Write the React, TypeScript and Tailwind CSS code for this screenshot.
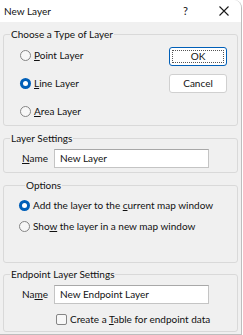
import React from 'react'

function Radio({ checked, children }: { checked?: boolean; children: React.ReactNode }) {
  return (
    <div className="flex items-center h-[20px] whitespace-nowrap">
      {checked ? (
        <span className="w-[11px] h-[11px] rounded-full bg-[#005fb8] flex items-center justify-center">
          <span className="w-[5px] h-[5px] rounded-full bg-white" />
        </span>
      ) : (
        <span className="w-[11px] h-[11px] rounded-full border border-[#858585] bg-[#f7f7f7]" />
      )}
      <span className="ml-[3px]">{children}</span>
    </div>
  )
}

function Group({ title, className, children }: { title: string; className?: string; children: React.ReactNode }) {
  return (
    <fieldset className={'border border-[#d9d9d9] rounded-[3px] ' + (className ?? '')}>
      <legend className="ml-[6px] px-[1px] leading-[16px] whitespace-nowrap">{title}</legend>
      {children}
    </fieldset>
  )
}

function Field({ label, value }: { label: React.ReactNode; value: string }) {
  return (
    <div className="flex items-center pl-[18px]">
      <span className="w-[32px] whitespace-nowrap">{label}</span>
      <div className="w-[155px] h-[19px] bg-white border border-[#c4c4c4] border-t-[#a8a8a8] flex items-center pl-[5px] whitespace-nowrap">
        {value}
      </div>
    </div>
  )
}

export default function App() {
  return (
    <div className="w-[243px] h-[335px] bg-white overflow-hidden font-['Lato',sans-serif] text-[10px] text-[#111]">
      <div className="w-[242px] h-[335px] flex flex-col bg-[#f0f0f0] rounded-tr-[8px] border-r border-b border-[#bdbdbd] overflow-hidden">
        <div className="h-[22px] bg-white flex items-center pl-[4px] shrink-0">
          <span>New Layer</span>
          <span className="ml-auto mr-[31px] text-[11px]">?</span>
          <svg width="10" height="10" viewBox="0 0 10 10" className="mr-[12px]">
            <path d="M0.5 0.5 L9.5 9.5 M9.5 0.5 L0.5 9.5" stroke="#1a1a1a" strokeWidth="1.1" />
          </svg>
        </div>

        <div className="px-[3px] flex flex-col">
          <Group title="Choose a Type of Layer" className="mt-[4px] pb-[4px]">
            <div className="flex">
              <div className="flex flex-col gap-[8px] pt-[3px] pl-[16px]">
                <Radio><u>P</u>oint Layer</Radio>
                <Radio checked><u>L</u>ine Layer</Radio>
                <Radio><u>A</u>rea Layer</Radio>
              </div>
              <div className="ml-auto mr-[10px] flex flex-col pt-[5px] gap-[8px]">
                <div className="w-[58px] h-[19px] rounded-[3px] border border-[#005fb8] bg-white p-[2px]">
                  <div className="w-full h-full border border-dotted border-[#555] flex items-center justify-center">OK</div>
                </div>
                <div className="w-[58px] h-[19px] rounded-[3px] border border-[#d0d0d0] bg-white flex items-center justify-center">Cancel</div>
              </div>
            </div>
          </Group>

          <Group title="Layer Settings" className="mt-[4px] pt-[3px] pb-[4px]">
            <Field label={<><u>N</u>ame</>} value="New Layer" />
          </Group>

          <Group title="Options" className="mt-[4px] h-[86px] pt-[2px] pl-[15px]">
            <div className="flex flex-col gap-[1px]">
              <Radio checked>Add the layer to the <u>c</u>urrent map window</Radio>
              <Radio>Sho<u>w</u> the layer in a new map window</Radio>
            </div>
          </Group>

          <Group title="Endpoint Layer Settings" className="mt-[3px] pt-[3px] pb-[4px]">
            <Field label={<>Na<u>m</u>e</>} value="New Endpoint Layer" />
            <div className="flex items-center h-[16px] mt-[7px] pl-[52px] whitespace-nowrap">
              <span className="w-[11px] h-[11px] rounded-[2px] border border-[#858585] bg-[#f7f7f7]" />
              <span className="ml-[3px]">Create a <u>T</u>able for endpoint data</span>
            </div>
          </Group>
        </div>
      </div>
    </div>
  )
}
